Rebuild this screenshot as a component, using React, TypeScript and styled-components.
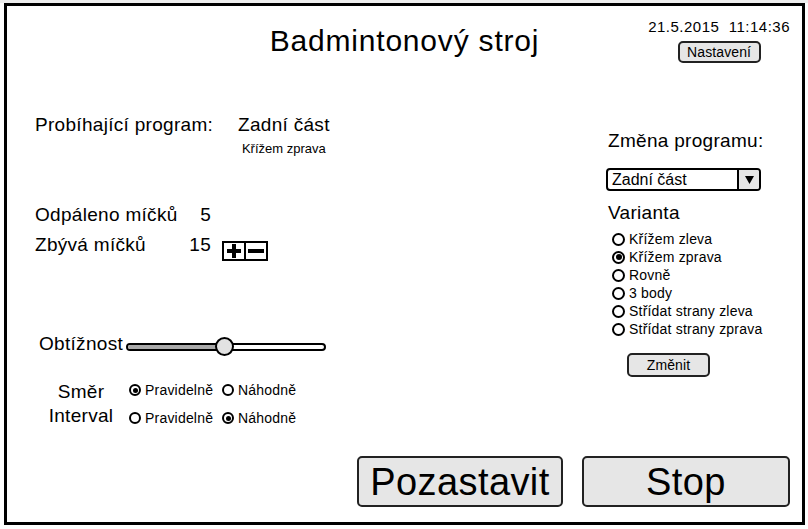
import React from "react";
import styled, { createGlobalStyle } from "styled-components";

const GlobalStyle = createGlobalStyle`
  html, body { margin: 0; padding: 0; background: #fff; }
  body { font-family: "Liberation Sans", Arial, sans-serif; color: #000; }
  * { box-sizing: border-box; }
`;

const Page = styled.div`
  width: 808px;
  height: 529px;
  border-top: 3px solid #eeeeee;
  padding-left: 4px;
`;

const Frame = styled.div`
  width: 801px;
  height: 522px;
  border: 3px solid #000;
  display: flex;
  flex-direction: column;
`;

const Header = styled.header`
  height: 64px;
  display: grid;
  grid-template-columns: 1fr auto 1fr;
  align-items: start;
`;

const Title = styled.h1`
  grid-column: 2;
  margin: 20px 0 0;
  font-size: 30px;
  line-height: 30px;
  font-weight: normal;
  letter-spacing: 0.8px;
  white-space: nowrap;
`;

const Clock = styled.div`
  grid-column: 3;
  justify-self: end;
  padding-right: 12px;
  margin-top: 13px;
  display: flex;
  flex-direction: column;
  align-items: center;
`;

const DateTime = styled.div`
  font-size: 15px;
  line-height: 16px;
  letter-spacing: 0.5px;
  white-space: pre;
`;

const Button = styled.button<{ $w: number; $h: number; $size: number }>`
  width: ${(p) => p.$w}px;
  height: ${(p) => p.$h}px;
  font-family: "Liberation Sans", Arial, sans-serif;
  font-size: ${(p) => p.$size}px;
  letter-spacing: ${(p) => (p.$size > 20 ? 0.4 : 0.1)}px;
  color: #000;
  background: #e6e6e6;
  border: 2px solid #222;
  border-radius: 5px;
  padding: 0;
  line-height: 1;
  display: flex;
  align-items: center;
  justify-content: center;
`;

const SettingsButton = styled(Button)`
  margin-top: 6px;
`;

const Body = styled.main`
  flex: 1;
  display: grid;
  grid-template-columns: 1fr 196px;
`;

const LeftColumn = styled.section`
  padding-left: 28px;
  display: flex;
  flex-direction: column;
  align-items: flex-start;
`;

const RightColumn = styled.section`
  display: flex;
  flex-direction: column;
  align-items: flex-start;
`;

const Label = styled.span`
  font-size: 19px;
  line-height: 22px;
  letter-spacing: 0.3px;
  white-space: nowrap;
`;

const ProgramRow = styled.div`
  margin-top: 44px;
  display: flex;
  align-items: flex-start;
`;

const ProgramLabel = styled(Label)`
  width: 203px;
`;

const ProgramValue = styled.div`
  display: flex;
  flex-direction: column;
  align-items: center;
`;

const SubValue = styled.span`
  margin-top: 5px;
  font-size: 13px;
  line-height: 16px;
  white-space: nowrap;
`;

const Counts = styled.div`
  margin-top: 47px;
  display: flex;
  flex-direction: column;
  gap: 8px;
`;

const CountRow = styled.div`
  display: flex;
  align-items: flex-start;
`;

const CountLabel = styled(Label)`
  width: 150px;
`;

const CountValue = styled(Label)`
  width: 26px;
  text-align: right;
`;

const Stepper = styled.div`
  margin: 7px 0 0 11px;
  height: 20px;
  display: flex;
  border: 2px solid #000;
  background: #fff;
`;

const StepCell = styled.div<{ $divider?: boolean }>`
  width: ${(p) => (p.$divider ? 22 : 20)}px;
  height: 16px;
  display: flex;
  align-items: center;
  justify-content: center;
  border-left: ${(p) => (p.$divider ? "2px solid #000" : "none")};
`;

const SliderRow = styled.div`
  margin-top: 72px;
  margin-left: 4px;
  display: flex;
  align-items: flex-start;
`;

const SliderBox = styled.div`
  position: relative;
  margin: 4px 0 0 3px;
  width: 200px;
  height: 19px;
  display: flex;
  align-items: center;
`;

const Track = styled.div`
  width: 200px;
  height: 8px;
  border: 2px solid #000;
  border-radius: 4px;
  background: #fff;
  overflow: hidden;
`;

const TrackFill = styled.div`
  height: 100%;
  background: #a9a9a9;
`;

const Thumb = styled.div`
  position: absolute;
  top: 0;
  width: 19px;
  height: 19px;
  margin-left: -9.5px;
  border: 2px solid #000;
  border-radius: 50%;
  background: #e2e2e2;
`;

const ModeTable = styled.div`
  margin-top: 24px;
  margin-left: 10px;
  display: flex;
  flex-direction: column;
`;

const ModeRow = styled.div`
  display: flex;
  align-items: flex-start;
  height: 24px;
`;

const ModeLabel = styled.span`
  width: 72px;
  text-align: center;
  font-size: 19px;
  line-height: 24px;
  letter-spacing: 0.3px;
`;

const ModeOptions = styled.div<{ $offset: number }>`
  margin: ${(p) => p.$offset}px 0 0 12px;
  display: flex;
`;

const RadioItem = styled.label<{ $w?: number; $h: number }>`
  display: flex;
  align-items: center;
  gap: 4px;
  height: ${(p) => p.$h}px;
  width: ${(p) => (p.$w ? `${p.$w}px` : "auto")};
  font-size: 14px;
  line-height: ${(p) => p.$h}px;
  letter-spacing: 0.2px;
  white-space: nowrap;
`;

const RadioCircle = styled.span<{ $size: number; $checked?: boolean }>`
  width: ${(p) => p.$size}px;
  height: ${(p) => p.$size}px;
  flex: none;
  border: 2px solid #000;
  border-radius: 50%;
  background: #fff;
  display: flex;
  align-items: center;
  justify-content: center;
  &::after {
    content: "";
    display: ${(p) => (p.$checked ? "block" : "none")};
    width: ${(p) => p.$size - 7}px;
    height: ${(p) => p.$size - 7}px;
    border-radius: 50%;
    background: #000;
  }
`;

const RightTitle = styled(Label)`
  margin: 60px 0 0 2px;
`;

const Select = styled.div`
  margin-top: 16px;
  width: 155px;
  height: 23px;
  border: 2px solid #000;
  border-radius: 4px;
  display: flex;
  overflow: hidden;
`;

const SelectText = styled.span`
  flex: 1;
  padding-left: 4px;
  font-size: 16px;
  line-height: 19px;
  white-space: nowrap;
`;

const SelectArrow = styled.span`
  width: 22px;
  border-left: 2px solid #000;
  background: #e6e6e6;
  display: flex;
  align-items: center;
  justify-content: center;
`;

const VariantTitle = styled(Label)`
  margin: 11px 0 0 2px;
`;

const VariantList = styled.div`
  margin: 6px 0 0 6px;
  display: flex;
  flex-direction: column;
`;

const ChangeButton = styled(Button)`
  margin: 15px 0 0 21px;
`;

const Footer = styled.footer`
  display: flex;
  justify-content: flex-end;
  gap: 19px;
  padding: 0 12px 15px 0;
`;

const Radio = ({
  label,
  checked,
  size,
  h,
  w,
}: {
  label: string;
  checked?: boolean;
  size: number;
  h: number;
  w?: number;
}) => (
  <RadioItem $h={h} $w={w}>
    <RadioCircle $size={size} $checked={checked} />
    {label}
  </RadioItem>
);

const variants = [
  "Křížem zleva",
  "Křížem zprava",
  "Rovně",
  "3 body",
  "Střídat strany zleva",
  "Střídat strany zprava",
];

const difficulty = 49;

export default function App() {
  return (
    <>
      <GlobalStyle />
      <Page>
        <Frame>
          <Header>
            <Title>Badmintonový stroj</Title>
            <Clock>
              <DateTime>{"21.5.2015  11:14:36"}</DateTime>
              <SettingsButton $w={83} $h={22} $size={14}>
                Nastavení
              </SettingsButton>
            </Clock>
          </Header>
          <Body>
            <LeftColumn>
              <ProgramRow>
                <ProgramLabel>Probíhající program:</ProgramLabel>
                <ProgramValue>
                  <Label>Zadní část</Label>
                  <SubValue>Křížem zprava</SubValue>
                </ProgramValue>
              </ProgramRow>
              <Counts>
                <CountRow>
                  <CountLabel>Odpáleno míčků</CountLabel>
                  <CountValue>5</CountValue>
                </CountRow>
                <CountRow>
                  <CountLabel>Zbývá míčků</CountLabel>
                  <CountValue>15</CountValue>
                  <Stepper>
                    <StepCell>
                      <svg width="16" height="14" viewBox="0 0 16 14">
                        <rect x="1" y="5" width="14" height="4" fill="#000" />
                        <rect x="6" y="0" width="4" height="14" fill="#000" />
                      </svg>
                    </StepCell>
                    <StepCell $divider>
                      <svg width="16" height="14" viewBox="0 0 16 14">
                        <rect x="0" y="5" width="16" height="4" fill="#000" />
                      </svg>
                    </StepCell>
                  </Stepper>
                </CountRow>
              </Counts>
              <SliderRow>
                <Label>Obtížnost</Label>
                <SliderBox>
                  <Track>
                    <TrackFill style={{ width: `${difficulty}%` }} />
                  </Track>
                  <Thumb style={{ left: `${difficulty}%` }} />
                </SliderBox>
              </SliderRow>
              <ModeTable>
                <ModeRow>
                  <ModeLabel>Směr</ModeLabel>
                  <ModeOptions $offset={2}>
                    <Radio label="Pravidelně" checked size={12} h={16} w={93} />
                    <Radio label="Náhodně" size={12} h={16} />
                  </ModeOptions>
                </ModeRow>
                <ModeRow>
                  <ModeLabel>Interval</ModeLabel>
                  <ModeOptions $offset={6}>
                    <Radio label="Pravidelně" size={12} h={16} w={93} />
                    <Radio label="Náhodně" checked size={12} h={16} />
                  </ModeOptions>
                </ModeRow>
              </ModeTable>
            </LeftColumn>
            <RightColumn>
              <RightTitle>Změna programu:</RightTitle>
              <Select>
                <SelectText>Zadní část</SelectText>
                <SelectArrow>
                  <svg width="9" height="8" viewBox="0 0 9 8">
                    <polygon points="0,0 9,0 4.5,8" fill="#000" />
                  </svg>
                </SelectArrow>
              </Select>
              <VariantTitle>Varianta</VariantTitle>
              <VariantList>
                {variants.map((v) => (
                  <Radio key={v} label={v} checked={v === "Křížem zprava"} size={13} h={18} />
                ))}
              </VariantList>
              <ChangeButton $w={83} $h={24} $size={14}>
                Změnit
              </ChangeButton>
            </RightColumn>
          </Body>
          <Footer>
            <Button $w={206} $h={51} $size={38}>
              Pozastavit
            </Button>
            <Button $w={208} $h={51} $size={38}>
              Stop
            </Button>
          </Footer>
        </Frame>
      </Page>
    </>
  );
}
